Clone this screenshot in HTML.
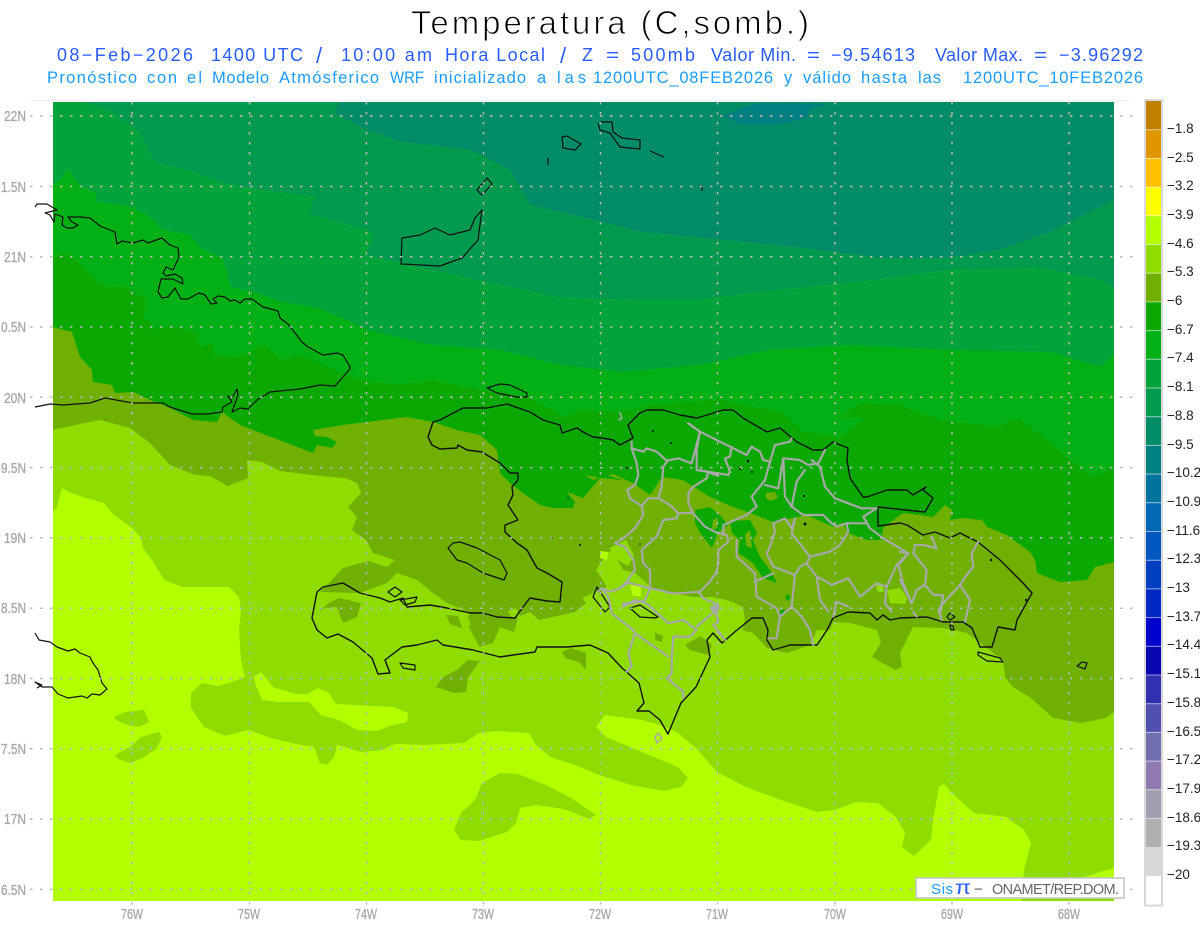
<!DOCTYPE html>
<html lang="es">
<head>
<meta charset="utf-8">
<title>Temperatura (C,somb.)</title>
<style>
html,body{margin:0;padding:0;background:#fff;width:1200px;height:927px;overflow:hidden}
svg{display:block}
text{font-family:"Liberation Sans",sans-serif}
.a{font-size:14.5px;fill:#a8a8a8;stroke:#a8a8a8;stroke-width:.35px}
.l1{font-size:18px;fill:#2a5cff}
.l2{font-size:16.5px;fill:#1a9cff}
.s{font-size:22px}
.c{font-size:13.5px;fill:#222}
</style>
</head>
<body>
<svg width="1200" height="927" viewBox="0 0 1200 927" xmlns="http://www.w3.org/2000/svg">
<rect width="1200" height="927" fill="#fff"/>
<line x1="30" y1="100.5" x2="1130" y2="100.5" stroke="#f0f0f0"/>

<!-- Base field -->
<rect x="53" y="102" width="1061" height="799" fill="#b3ff00"/>

<!-- Light green -->
<g fill="#8fdc00">
<polygon points="53,512 57,507 62,488 71,493 86,498 104,503 114,515 132,528 141,538 143,548 154,563 164,580 182,587 204,587 229,587 239,597 241,610 239,630 241,660 245,677 229,683 218,686 202,683 191,693 191,708 204,727 225,736 248,730 271,738 296,744 314,747 320,763 327,765 334,757 337,745 361,752 382,750 395,744 425,745 464,743 479,733 496,731 529,733 536,745 550,757 575,765 599,775 631,785 664,791 681,787 688,778 678,767 642,752 606,737 596,727 605,715 642,720 660,725 678,733 696,748 717,772 746,787 781,800 817,812 835,810 856,802 878,803 896,817 905,833 902,847 914,856 931,840 933,820 939,787 944,784 956,797 974,813 1006,817 1024,830 1031,843 1024,870 1021,901 1114,901 1114,102 53,102"/>
<polygon points="114,717 125,712 144,710 149,722 139,727 127,725 116,720"/>
<polygon points="115,755 130,747 141,737 159,732 162,737 157,748 143,758 130,763 118,759"/>
<polygon points="454,830 461,813 475,800 482,783 500,773 518,774 546,785 571,798 596,815 589,819 564,809 536,805 520,808 516,823 507,832 479,841 461,840"/>
</g>
<!-- Lime islands in light green -->
<g fill="#b3ff00">
<polygon points="254,677 261,672 273,687 296,694 307,694 318,688 329,693 336,704 354,705 393,707 408,713 407,722 389,726 377,731 357,730 339,720 321,715 309,702 279,702 262,700 255,683"/>
<polygon points="1075,880 1100,872 1114,868 1114,882"/>
</g>

<!-- Olive -->
<g fill="#70b000">
<polygon points="53,430 80,424 100,420 130,428 150,443 170,465 195,475 210,476 228,486 248,478 247,460 262,462 280,471 320,476 345,478 357,483 361,493 348,507 357,517 352,530 366,540 373,553 395,560 387,567 368,561 343,568 329,583 320,592 360,593 387,583 397,573 417,580 433,593 447,603 470,613 468,617 479,647 493,643 500,627 514,632 518,617 530,612 539,620 575,612 586,603 582,598 593,593 607,587 596,570 607,553 612,550 623,570 635,573 652,588 693,597 712,597 727,600 743,607 745,620 742,630 753,633 767,648 787,653 810,645 817,630 830,630 833,622 850,623 877,630 881,643 872,657 895,670 902,667 900,653 913,627 943,628 967,633 980,643 1003,660 1005,677 1013,687 1031,698 1053,718 1081,723 1106,718 1114,712 1114,300 53,300"/>
<polygon points="318,612 329,603 339,598 361,603 357,617 343,623 337,607 325,608"/>
<polygon points="436,687 443,677 457,670 468,660 480,661 468,677 466,692 454,693"/>
<polygon points="562,652 571,648 586,653 586,670 579,662 565,658"/>
<polygon points="685,645 700,636 712,645 708,655 690,650"/>
<polygon points="655,633 663,636 662,642 655,640"/>
<polygon points="468,626 480,622 485,630 476,640"/>
<polygon points="446,615 458,616 462,628 450,624"/>
</g>
<!-- Light green patches on olive -->
<g fill="#8fdc00">
<polygon points="887,590 900,588 907,598 905,604 890,603"/>
<polygon points="876,585 882,584 884,592 878,592"/>
<polygon points="610,548 626,540 634,556 628,566 614,558"/>
<polygon points="508,611 516,608 520,616 512,618"/>
</g>
<g fill="#b3ff00">
<polygon points="630,585 641,586 641,596 633,596"/>
<polygon points="600,551 608,552 607,560 600,558"/>
</g>

<!-- Green -->
<g fill="#0aa800">
<polygon points="53,257 67,253 73,257 83,267 97,282 110,288 125,285 133,292 148,300 143,317 153,323 150,330 173,327 197,333 200,347 213,343 213,355 240,357 263,345 283,360 300,355 333,360 357,380 400,385 433,380 480,390 527,397 553,410 563,418 580,410 617,412 650,405 720,400 783,413 803,432 840,437 867,418 840,417 860,403 900,405 940,420 1000,427 1010,420 1020,420 1047,440 1067,457 1093,477 1114,467 1114,562 1095,567 1087,580 1060,582 1037,573 1035,560 1030,552 1007,535 987,527 982,520 963,518 950,520 952,510 945,505 933,517 905,513 900,515 883,528 882,540 867,540 848,533 843,523 833,527 807,515 793,518 773,522 750,513 733,507 710,497 683,480 662,477 650,495 633,483 613,474 600,478 583,498 585,475 593,480 607,475 623,480 600,478 585,475 583,498 567,492 575,502 573,508 553,508 540,505 523,493 510,483 500,473 497,450 480,435 457,430 433,422 407,417 367,422 343,425 313,430 315,436 327,437 337,442 332,448 317,445 313,453 300,448 240,425 222,412 217,422 193,420 170,408 150,400 133,392 115,393 112,385 93,382 92,370 80,357 72,332 53,327"/>
<polygon points="695,510 710,507 720,515 728,525 718,532 712,548 700,533 695,523"/>
<polygon points="730,521 750,520 757,533 753,540 760,557 770,570 777,583 763,578 753,563 738,553 740,540 732,533"/>
<polygon points="787,594 791,597 788,601 785,598"/>
<polygon points="780,611 785,609 783,615 780,616"/>
</g>
<g fill="#70b000">
<polygon points="766,493 775,492 778,498 770,501 766,498"/>
<polygon points="713,520 718,518 717,528 712,530"/>
<polygon points="745,534 750,530 752,548 746,546"/>
</g>

<!-- Green 2 -->
<polygon fill="#00b014" points="53,185 60,180 68,169 75,180 83,188 95,193 97,202 127,206 147,215 163,230 190,235 200,248 222,258 227,273 230,287 253,292 283,302 317,308 347,320 367,330 357,380 300,355 283,360 263,345 240,357 213,355 213,343 200,347 197,333 173,327 150,330 153,323 143,317 148,300 133,292 125,285 110,288 97,282 83,267 73,257 67,253 53,257"/>
<polygon fill="#00b014" points="367,330 430,345 500,350 560,365 620,372 700,365 770,350 850,345 950,350 1050,352 1100,367 1114,355 1114,467 1093,477 1067,457 1047,440 1020,420 1010,420 1000,427 940,420 900,405 860,403 840,417 867,418 840,437 803,432 783,413 720,400 650,405 617,412 580,410 563,418 553,410 527,397 480,390 433,380 400,385 357,380"/>

<!-- Green 3 -->
<polygon fill="#00a43a" points="53,102 83,102 112,112 140,133 147,150 157,163 193,172 220,182 253,189 315,197 307,213 340,223 373,232 373,240 365,255 430,270 500,285 560,298 640,300 700,300 780,290 860,282 950,270 1040,268 1100,280 1114,290 1114,355 1100,367 1050,352 950,350 850,345 770,350 700,365 620,372 560,365 500,350 430,345 367,330 347,320 317,308 283,302 253,292 230,287 227,273 222,258 200,248 190,235 163,230 147,215 127,206 97,202 95,193 83,188 75,180 68,169 60,180 53,185"/>

<!-- Green 4 -->
<polygon fill="#009a4e" points="83,102 340,102 332,113 367,130 400,142 470,150 510,170 530,205 600,222 640,232 720,240 800,248 880,258 950,258 1000,250 1050,232 1114,200 1114,290 1100,280 1040,268 950,270 860,282 780,290 700,300 640,300 560,298 500,285 430,270 365,255 373,240 373,232 340,223 307,213 315,197 253,189 220,182 193,172 157,163 147,150 140,133 112,112"/>

<!-- Teal -->
<polygon fill="#008c66" points="340,102 1114,102 1114,200 1050,232 1000,250 950,258 880,258 800,248 720,240 640,232 600,222 530,205 510,170 470,150 400,142 367,130 332,113"/>
<polygon fill="#008080" points="722,117 742,108 761,103 829,104 810,108 808,117 784,124 745,125"/>

<!-- Coast lines -->
<g fill="none" stroke="#111" stroke-width="1.2" stroke-linejoin="round">
<polyline points="35,207 37,204 47,204 57,210 45,213 50,215 54,222 55,214 63,217 62,225 67,228 73,228 78,225 72,222 68,217 80,217 90,218 100,226 115,232 117,244 122,241 133,243 143,240 148,243 162,238 170,245 178,248 179,257 173,270 166,267 163,273 166,276 175,274 182,278 183,284 173,279 161,279 158,292 162,298 168,297 175,288 181,299 188,299 199,293 205,295 211,304 217,303 213,299 218,296 225,297 230,301 235,300 240,303 245,299 252,299 263,307 278,311 280,318 288,324 302,342 308,347 323,355 337,353 343,355 350,367 350,369 335,386 320,385 300,389 270,392 257,400 248,409 240,408 232,412 238,395 237,389 232,398 228,396 232,402 223,407 222,412 207,414 192,414 170,407 163,403 133,403 105,398 90,403 63,405 50,404 35,407"/>
<polyline points="35,633 39,640 50,642 57,647 68,651 75,649 80,653 90,657 93,663 98,670 102,683 107,689 100,695 92,694 87,698 82,696 68,698 58,694 52,687 42,687 35,682 42,685 37,688"/>
<!-- Bahamas / Turks -->
<polygon points="402,238 401,264 440,266 462,258 478,240 482,210 475,218 470,230 450,235 435,228 420,235"/>
<polygon points="477,190 487,178 492,184 482,195"/>
<polygon points="562,137 567,136 581,144 575,150 563,148"/>
<polyline points="598,123 600,130 610,133 620,147 640,149 640,140 622,138 613,132 612,122 600,122"/>
<polyline points="650,151 664,157"/>
<polyline points="548,158 548,165"/>
<polyline points="702,185 702,191"/>
<!-- Tortuga -->
<polygon points="487,388 500,384 510,385 527,393 527,397 517,397 497,393"/>
<!-- Hispaniola -->
<polygon stroke-width="1.4" points="633,438 620,445 613,440 602,438 593,437 583,432 577,428 562,433 560,425 543,420 530,412 507,404 487,408 463,408 440,420 433,422 428,437 432,445 440,449 457,448 458,445 467,450 482,452 500,463 510,473 518,473 518,480 512,487 513,495 508,505 518,520 505,525 505,532 517,543 527,550 537,568 547,573 562,582 560,602 547,601 530,598 523,607 515,618 497,617 483,613 470,613 447,608 430,605 407,607 403,598 390,602 380,598 360,593 343,583 323,587 317,592 312,618 317,630 327,638 338,634 353,642 372,658 378,674 390,673 385,660 402,647 417,645 437,640 443,645 473,650 500,657 513,655 535,652 537,647 567,647 590,645 608,653 622,668 639,683 644,703 637,711 649,711 660,720 668,734 681,703 696,687 710,657 707,640 713,633 722,643 737,630 752,618 763,618 768,630 767,640 773,650 790,645 817,645 827,630 833,618 848,612 870,613 877,620 883,615 890,620 900,618 927,617 943,622 963,622 972,628 980,647 992,647 998,627 1015,630 1017,620 1032,593 1023,583 1000,560 978,542 960,533 950,538 935,532 923,535 907,525 900,523 878,526 878,507 925,512 933,498 923,490 926,487 913,495 907,490 887,490 867,497 863,497 850,478 847,460 848,448 833,442 823,450 813,450 797,442 780,428 767,432 743,418 733,410 723,410 707,415 697,418 680,415 663,410 647,410 640,413 628,425"/>
<!-- Islands and lakes -->
<polygon points="448,548 453,543 460,542 477,548 500,560 507,573 504,580 483,573 467,563 457,560"/>
<polygon points="400,663 415,665 415,670 403,668"/>
<polygon points="388,592 395,587 402,592 395,597"/>
<polygon points="400,600 417,597 415,602 405,605"/>
<polygon points="630,608 640,605 658,617 655,618 640,617"/>
<polygon points="593,597 597,587 610,607 605,612"/>
<polygon points="978,652 1000,658 1003,662 987,661 978,655"/>
<polygon points="1077,666 1082,662 1087,663 1085,669"/>
<polygon points="947,617 950,613 955,617 950,620"/>
<polygon points="950,625 953,626 954,630 951,630"/>
</g>

<!-- Province borders -->
<g fill="none" stroke="#a8a8a8" stroke-linejoin="round" stroke-linecap="round">
<g transform="translate(600 400) scale(.3333)" stroke-width="6.5">
<polyline points="95,125 95,145 110,190 115,225 105,255 82,270 90,295 125,318 130,345 105,385 70,415 45,430 75,440 100,480 105,510 80,545 60,565 30,575 5,565 25,590 35,640 100,690 105,700 85,760 95,800 80,815"/>
<polyline points="95,145 130,155 140,145 170,155 200,182 235,175 275,190 300,95 265,70"/>
<polyline points="265,70 300,95 390,140 440,165 455,140 480,155 490,180 510,185 525,135 570,125 575,115"/>
<polyline points="300,95 290,150 290,210 325,215 320,235 280,260 265,280 265,310 278,338 315,380 350,398 380,405 385,425 355,450 355,490 350,515 330,545 300,575 235,580 215,580 175,570 150,565 150,510 130,490 125,450 170,410 190,360 230,355 235,340 278,338"/>
<polyline points="205,180 190,200 185,260 175,295 210,315 235,340"/>
<polyline points="175,295 145,295 125,318"/>
<polyline points="150,565 85,548 60,565"/>
<polyline points="150,565 135,600 100,610 70,610 70,620 105,600 140,610 205,670 250,660 290,690 270,710 220,710 215,775 215,820 200,835 250,875 250,895"/>
<polyline points="105,700 205,770"/>
<polyline points="295,575 310,595 345,610 350,630 290,680"/>
<polyline points="345,630 355,665 340,675 375,720"/>
<polyline points="290,210 385,225 390,215 375,175 390,170 395,140"/>
<polyline points="320,215 355,228"/>
<polyline points="510,185 495,240 455,290 470,320 440,345 370,375 370,405"/>
<polyline points="495,255 535,265 550,175 600,180 625,195 655,190 675,150"/>
<polyline points="635,180 660,200 675,260 705,295 785,325 830,325 790,350 810,385 850,415 925,460 890,495 860,560 855,610 875,635"/>
<polyline points="615,210 590,245 575,320 610,345 670,345 695,370 710,380 740,370 745,395 720,435 690,455 630,470 575,400 585,355 575,385 555,355 520,370 525,395 510,440 500,460 520,500 585,525 600,500 620,490 630,470"/>
<polyline points="550,175 555,290 575,320"/>
<polyline points="620,490 650,530 670,540 695,555 745,535 780,590 830,550 860,560"/>
<polyline points="650,530 660,600 685,635"/>
<polyline points="585,525 575,620 605,650 630,690 640,735"/>
<polyline points="575,620 540,650 530,715 505,715"/>
<polyline points="410,420 410,470 465,520 470,590 530,625 540,650"/>
<polyline points="465,545 520,520"/>
<polyline points="740,370 800,370"/>
<polyline points="700,650 710,605 745,620"/>
<polyline points="895,495 910,550 935,610"/>
<polyline points="-5,575 5,565"/>
<polygon points="335,620 355,615 355,630 335,630" fill="#a8a8a8"/>
</g>
<g transform="translate(900 420) scale(.3333)" stroke-width="6.5">
<polyline points="235,365 215,400 220,440 200,465 180,495 130,550 115,570 125,600"/>
<polyline points="180,495 210,540 195,605"/>
<polyline points="0,395 25,400 0,430"/>
<polyline points="95,350 110,385 70,375 45,375 40,400 80,450 75,495 50,510 35,550 0,480"/>
<polyline points="75,495 100,525 130,525 120,580"/>
<polyline points="40,575 50,590"/>
</g>
<polygon points="655,737 658,733 662,738 657,743" stroke-width="1.5"/>
<polyline points="620,413 622,418 619,420" stroke-width="1.5"/>
</g>
<!-- Specks -->
<g fill="#111">
<circle cx="653" cy="431" r="1"/><circle cx="671" cy="443" r="1"/><circle cx="748" cy="461" r="1.3"/><circle cx="740" cy="469" r="1"/><circle cx="752" cy="472" r="1"/><circle cx="805" cy="524" r="1.5"/><circle cx="804" cy="496" r="1"/><circle cx="991" cy="560" r="1.2"/><circle cx="1026" cy="600" r="1.2"/><circle cx="568" cy="498" r=".8"/><circle cx="580" cy="545" r="1"/><circle cx="552" cy="538" r="1"/><circle cx="640" cy="544" r=".8"/><circle cx="627" cy="468" r="1"/>
</g>

<!-- Grid -->
<g stroke="#b8b8b8" stroke-width="1.5" stroke-dasharray="2.5 7.5" fill="none">
<path d="M30 116H1134M30 186.5H1134M30 256.8H1134M30 327H1134M30 397.3H1134M30 467.6H1134M30 537.9H1134M30 608.2H1134M30 678.5H1134M30 748.8H1134M30 819.1H1134M30 889.4H1134"/>
<path d="M132 102V906M249.5 102V906M366.5 102V906M483.5 102V906M600.5 102V906M717.5 102V906M835 102V906M952 102V906M1069 102V906"/>
</g>

<!-- Axis labels -->
<g>
<text class="a" x="4" y="121" textLength="22" lengthAdjust="spacingAndGlyphs">22N</text>
<text class="a" x="1" y="192" textLength="25" lengthAdjust="spacingAndGlyphs">1.5N</text>
<text class="a" x="4" y="262" textLength="22" lengthAdjust="spacingAndGlyphs">21N</text>
<text class="a" x="1" y="332" textLength="25" lengthAdjust="spacingAndGlyphs">0.5N</text>
<text class="a" x="4" y="403" textLength="22" lengthAdjust="spacingAndGlyphs">20N</text>
<text class="a" x="1" y="473" textLength="25" lengthAdjust="spacingAndGlyphs">9.5N</text>
<text class="a" x="4" y="543" textLength="22" lengthAdjust="spacingAndGlyphs">19N</text>
<text class="a" x="1" y="613" textLength="25" lengthAdjust="spacingAndGlyphs">8.5N</text>
<text class="a" x="4" y="684" textLength="22" lengthAdjust="spacingAndGlyphs">18N</text>
<text class="a" x="1" y="754" textLength="25" lengthAdjust="spacingAndGlyphs">7.5N</text>
<text class="a" x="4" y="824" textLength="22" lengthAdjust="spacingAndGlyphs">17N</text>
<text class="a" x="1" y="895" textLength="25" lengthAdjust="spacingAndGlyphs">6.5N</text>
<text class="a" x="121" y="919" textLength="22" lengthAdjust="spacingAndGlyphs">76W</text>
<text class="a" x="238" y="919" textLength="22" lengthAdjust="spacingAndGlyphs">75W</text>
<text class="a" x="355" y="919" textLength="22" lengthAdjust="spacingAndGlyphs">74W</text>
<text class="a" x="472" y="919" textLength="22" lengthAdjust="spacingAndGlyphs">73W</text>
<text class="a" x="589" y="919" textLength="22" lengthAdjust="spacingAndGlyphs">72W</text>
<text class="a" x="706" y="919" textLength="22" lengthAdjust="spacingAndGlyphs">71W</text>
<text class="a" x="824" y="919" textLength="22" lengthAdjust="spacingAndGlyphs">70W</text>
<text class="a" x="941" y="919" textLength="22" lengthAdjust="spacingAndGlyphs">69W</text>
<text class="a" x="1058" y="919" textLength="22" lengthAdjust="spacingAndGlyphs">68W</text>
</g>

<!-- Title -->
<text x="411" y="34" font-size="33" fill="#000" stroke="#fff" stroke-width=".9" textLength="398" lengthAdjust="spacing">Temperatura (C,somb.)</text>

<!-- Line 1 -->
<g>
<text class="l1" x="57" y="61" textLength="136" lengthAdjust="spacing">08−Feb−2026</text>
<text class="l1" x="211" y="61" textLength="92" lengthAdjust="spacing">1400 UTC</text>
<text class="l1 s" x="316" y="63">/</text>
<text class="l1" x="341" y="61" textLength="91" lengthAdjust="spacing">10:00 am</text>
<text class="l1" x="445" y="61" textLength="100" lengthAdjust="spacing">Hora Local</text>
<text class="l1 s" x="560" y="63">/</text>
<text class="l1" x="582" y="61">Z</text>
<text class="l1" x="606" y="61" textLength="13" lengthAdjust="spacingAndGlyphs">=</text>
<text class="l1" x="631" y="61" textLength="64" lengthAdjust="spacing">500mb</text>
<text class="l1" x="711" y="61" textLength="85" lengthAdjust="spacing">Valor Min.</text>
<text class="l1" x="807" y="61" textLength="13" lengthAdjust="spacingAndGlyphs">=</text>
<text class="l1" x="831" y="61" textLength="84" lengthAdjust="spacing">−9.54613</text>
<text class="l1" x="935" y="61" textLength="88" lengthAdjust="spacing">Valor Max.</text>
<text class="l1" x="1034" y="61" textLength="13" lengthAdjust="spacingAndGlyphs">=</text>
<text class="l1" x="1059" y="61" textLength="84" lengthAdjust="spacing">−3.96292</text>
</g>

<!-- Line 2 -->
<g>
<text class="l2" x="47" y="83" textLength="90" lengthAdjust="spacing">Pronóstico</text>
<text class="l2" x="147" y="83" textLength="30" lengthAdjust="spacing">con</text>
<text class="l2" x="187" y="83" textLength="15" lengthAdjust="spacing">el</text>
<text class="l2" x="212" y="83" textLength="57" lengthAdjust="spacing">Modelo</text>
<text class="l2" x="279" y="83" textLength="100" lengthAdjust="spacing">Atmósferico</text>
<text class="l2" x="390" y="83" textLength="34" lengthAdjust="spacingAndGlyphs">WRF</text>
<text class="l2" x="434" y="83" textLength="92" lengthAdjust="spacing">inicializado</text>
<text class="l2" x="537" y="83">a</text>
<text class="l2" x="557" y="83" textLength="29" lengthAdjust="spacing">las</text>
<text class="l2" x="593" y="83" textLength="180" lengthAdjust="spacing">1200UTC_08FEB2026</text>
<text class="l2" x="784" y="83">y</text>
<text class="l2" x="803" y="83" textLength="48" lengthAdjust="spacing">válido</text>
<text class="l2" x="861" y="83" textLength="46" lengthAdjust="spacing">hasta</text>
<text class="l2" x="918" y="83" textLength="23" lengthAdjust="spacing">las</text>
<text class="l2" x="963" y="83" textLength="180" lengthAdjust="spacing">1200UTC_10FEB2026</text>
</g>

<!-- Colorbar -->
<rect x="1145" y="100" width="17" height="805.5" fill="#fff" stroke="#d8d8d8" stroke-width="2"/>
<g>
<rect x="1146" y="101" width="15" height="28.7" fill="#bf8000"/>
<rect x="1146" y="129.7" width="15" height="28.7" fill="#df9600"/>
<rect x="1146" y="158.4" width="15" height="28.7" fill="#ffc000"/>
<rect x="1146" y="187.1" width="15" height="28.7" fill="#ffff00"/>
<rect x="1146" y="215.8" width="15" height="28.7" fill="#b3ff00"/>
<rect x="1146" y="244.5" width="15" height="28.7" fill="#8fdc00"/>
<rect x="1146" y="273.2" width="15" height="28.7" fill="#70b000"/>
<rect x="1146" y="301.9" width="15" height="28.7" fill="#0aa800"/>
<rect x="1146" y="330.6" width="15" height="28.7" fill="#00b014"/>
<rect x="1146" y="359.3" width="15" height="28.7" fill="#00a43a"/>
<rect x="1146" y="388" width="15" height="28.7" fill="#009a4e"/>
<rect x="1146" y="416.7" width="15" height="28.7" fill="#008c66"/>
<rect x="1146" y="445.4" width="15" height="28.7" fill="#008080"/>
<rect x="1146" y="474.1" width="15" height="28.7" fill="#00749c"/>
<rect x="1146" y="502.8" width="15" height="28.7" fill="#0068b4"/>
<rect x="1146" y="531.5" width="15" height="28.7" fill="#0058c0"/>
<rect x="1146" y="560.2" width="15" height="28.7" fill="#0040c0"/>
<rect x="1146" y="588.9" width="15" height="28.7" fill="#0028c4"/>
<rect x="1146" y="617.6" width="15" height="28.7" fill="#0000cc"/>
<rect x="1146" y="646.3" width="15" height="28.7" fill="#0808b0"/>
<rect x="1146" y="675" width="15" height="28.7" fill="#3030b0"/>
<rect x="1146" y="703.7" width="15" height="28.7" fill="#5050b0"/>
<rect x="1146" y="732.4" width="15" height="28.7" fill="#7070b0"/>
<rect x="1146" y="761.1" width="15" height="28.7" fill="#9078b0"/>
<rect x="1146" y="789.8" width="15" height="28.7" fill="#a0a0b0"/>
<rect x="1146" y="818.5" width="15" height="28.7" fill="#b0b0b0"/>
<rect x="1146" y="847.2" width="15" height="28.7" fill="#d8d8d8"/>
<rect x="1146" y="875.9" width="15" height="28.7" fill="#ffffff"/>
</g>
<g stroke="#fff" stroke-opacity=".55" stroke-width="1">
<path d="M1146 129.7H1161M1146 158.4H1161M1146 187.1H1161M1146 215.8H1161M1146 244.5H1161M1146 273.2H1161M1146 301.9H1161M1146 330.6H1161M1146 359.3H1161M1146 388H1161M1146 416.7H1161M1146 445.4H1161M1146 474.1H1161M1146 502.8H1161M1146 531.5H1161M1146 560.2H1161M1146 588.9H1161M1146 617.6H1161M1146 646.3H1161M1146 675H1161M1146 703.7H1161M1146 732.4H1161M1146 761.1H1161M1146 789.8H1161M1146 818.5H1161"/>
</g>
<g>
<text class="c" x="1167" y="133">−1.8</text>
<text class="c" x="1167" y="162">−2.5</text>
<text class="c" x="1167" y="190">−3.2</text>
<text class="c" x="1167" y="219">−3.9</text>
<text class="c" x="1167" y="248">−4.6</text>
<text class="c" x="1167" y="276">−5.3</text>
<text class="c" x="1167" y="305">−6</text>
<text class="c" x="1167" y="334">−6.7</text>
<text class="c" x="1167" y="362">−7.4</text>
<text class="c" x="1167" y="391">−8.1</text>
<text class="c" x="1167" y="420">−8.8</text>
<text class="c" x="1167" y="449">−9.5</text>
<text class="c" x="1167" y="477">−10.2</text>
<text class="c" x="1167" y="506">−10.9</text>
<text class="c" x="1167" y="535">−11.6</text>
<text class="c" x="1167" y="563">−12.3</text>
<text class="c" x="1167" y="592">−13</text>
<text class="c" x="1167" y="621">−13.7</text>
<text class="c" x="1167" y="649">−14.4</text>
<text class="c" x="1167" y="678">−15.1</text>
<text class="c" x="1167" y="707">−15.8</text>
<text class="c" x="1167" y="736">−16.5</text>
<text class="c" x="1167" y="764">−17.2</text>
<text class="c" x="1167" y="793">−17.9</text>
<text class="c" x="1167" y="822">−18.6</text>
<text class="c" x="1167" y="850">−19.3</text>
<text class="c" x="1167" y="879">−20</text>
</g>

<!-- Credit box -->
<rect x="916" y="878" width="208" height="20" fill="#fff" stroke="#c4c4c4" stroke-width="1.5"/>
<text x="931" y="894" font-size="15" fill="#1a9cff" textLength="22" lengthAdjust="spacing">Sis</text>
<text x="955" y="894" font-size="19" fill="#2a5cff" textLength="16" lengthAdjust="spacingAndGlyphs">π</text>
<text x="974" y="894" font-size="14.5" fill="#555" textLength="9" lengthAdjust="spacingAndGlyphs">−</text>
<text x="992" y="894" font-size="14.5" fill="#666" textLength="127" lengthAdjust="spacing">ONAMET/REP.DOM.</text>
</svg>
</body>
</html>
